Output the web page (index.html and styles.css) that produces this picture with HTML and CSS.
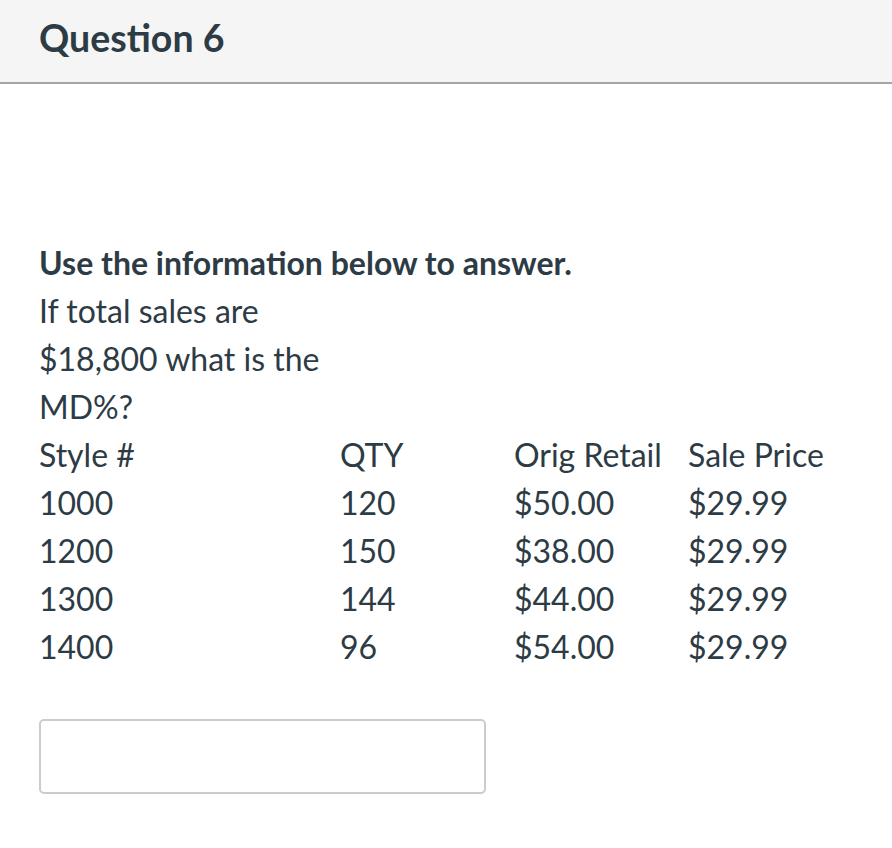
FILE: index.html
```html
<!DOCTYPE html>
<html lang="en">
<head>
    <meta charset="UTF-8">
    <title>Question 6</title>
    <link rel="stylesheet" href="styles.css">
</head>
<body>
<div class="question-header">
    <h2>Question 6</h2>
</div>
<div class="question-body">
    <p class="lead">Use the information below to answer.</p>
    <p class="prompt">If total sales are $18,800 what is the MD%?</p>
    <div class="data-table">
        <span>Style #</span><span>QTY</span><span>Orig Retail</span><span>Sale Price</span>
        <span>1000</span><span>120</span><span>$50.00</span><span>$29.99</span>
        <span>1200</span><span>150</span><span>$38.00</span><span>$29.99</span>
        <span>1300</span><span>144</span><span>$44.00</span><span>$29.99</span>
        <span>1400</span><span>96</span><span>$54.00</span><span>$29.99</span>
    </div>
    <input type="text" class="answer" aria-label="Answer">
</div>
</body>
</html>
```

FILE: styles.css
```css
body {
    font-family: 'Lato', 'Liberation Sans', sans-serif;
    background-color: #fff;
    color: #2d3b45;
    margin: 0;
    padding: 0;
}

.question-header {
    background-color: #f5f5f5;
    border-bottom: 2px solid #a5a5a5;
    height: 82px;
    padding: 0 39px;
    display: flex;
    align-items: center;
}

.question-header h2 {
    margin: 0;
    font-size: 37.5px;
    font-weight: 700;
    padding-bottom: 7px;
}

.question-body {
    padding: 155px 39px 0;
    font-size: 32px;
    line-height: 48px;
}

.question-body p {
    margin: 0;
}

.lead {
    font-weight: 700;
}

.prompt {
    width: 295px;
}

.data-table {
    display: grid;
    grid-template-columns: 301px 174px 174px auto;
}

.answer {
    display: block;
    margin-top: 48px;
    width: 447px;
    height: 75px;
    box-sizing: border-box;
    border: 2px solid #ccc;
    border-radius: 5px;
    outline: none;
    font-size: 27px;
    padding: 0 12px;
}
```
